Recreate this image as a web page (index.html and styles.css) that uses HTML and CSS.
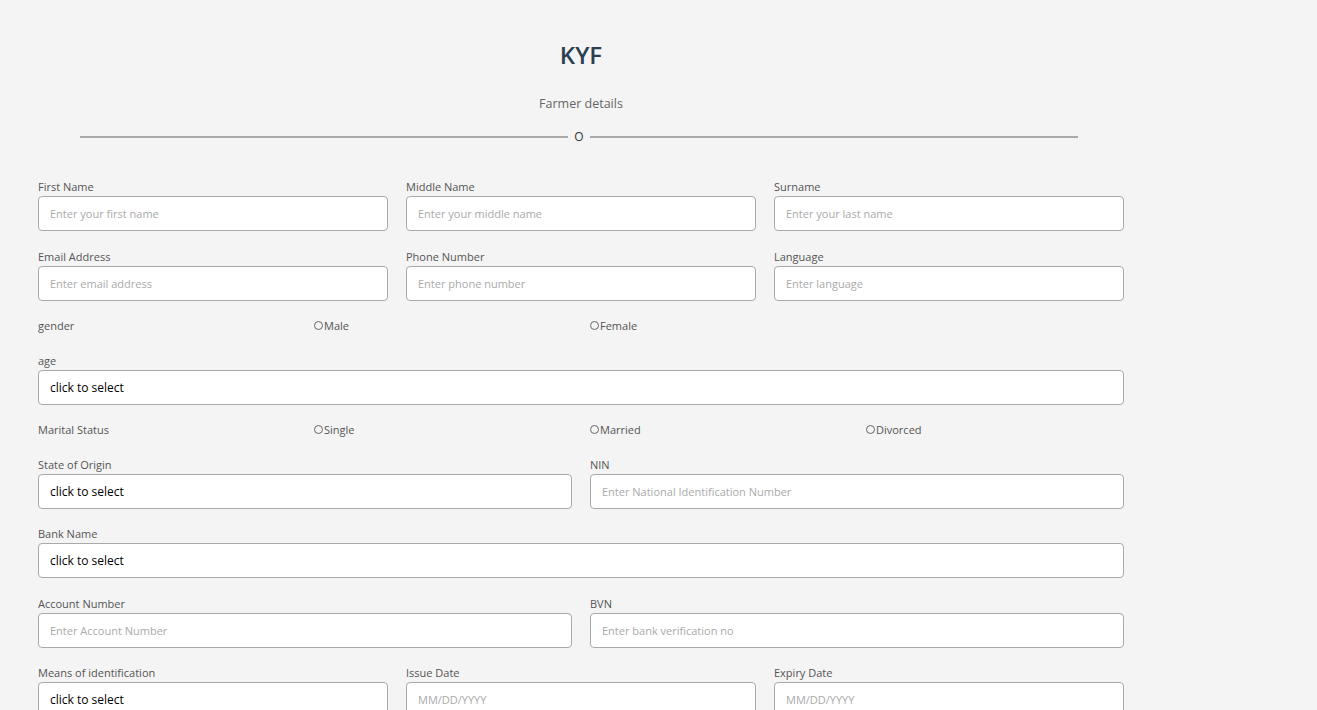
FILE: index.html
```html
<!DOCTYPE html>
<html lang="en">
<head>
<meta charset="utf-8">
<title>KYF</title>
<link rel="stylesheet" href="styles.css">
</head>
<body>
<div class="page">
  <header class="head">
    <h1 class="title">KYF</h1>
    <p class="subtitle">Farmer details</p>
    <div class="divider"><span class="line"></span><span class="step">O</span><span class="line"></span></div>
  </header>
  <form class="form">
    <div class="row cols-3">
      <div class="field"><label class="lbl">First Name</label><input class="inp" placeholder="Enter your first name"></div>
      <div class="field"><label class="lbl">Middle Name</label><input class="inp" placeholder="Enter your middle name"></div>
      <div class="field"><label class="lbl">Surname</label><input class="inp" placeholder="Enter your last name"></div>
    </div>
    <div class="row cols-3">
      <div class="field"><label class="lbl">Email Address</label><input class="inp" placeholder="Enter email address"></div>
      <div class="field"><label class="lbl">Phone Number</label><input class="inp" placeholder="Enter phone number"></div>
      <div class="field"><label class="lbl">Language</label><input class="inp" placeholder="Enter language"></div>
    </div>
    <div class="row cols-4 radios">
      <span class="lbl">gender</span>
      <label class="opt"><input type="radio" name="g" class="rad">Male</label>
      <label class="opt"><input type="radio" name="g" class="rad">Female</label>
    </div>
    <div class="row">
      <div class="field"><label class="lbl">age</label><div class="inp sel">click to select</div></div>
    </div>
    <div class="row cols-4 radios">
      <span class="lbl">Marital Status</span>
      <label class="opt"><input type="radio" name="m" class="rad">Single</label>
      <label class="opt"><input type="radio" name="m" class="rad">Married</label>
      <label class="opt"><input type="radio" name="m" class="rad">Divorced</label>
    </div>
    <div class="row cols-2">
      <div class="field"><label class="lbl">State of Origin</label><div class="inp sel">click to select</div></div>
      <div class="field"><label class="lbl">NIN</label><input class="inp" placeholder="Enter National Identification Number"></div>
    </div>
    <div class="row">
      <div class="field"><label class="lbl">Bank Name</label><div class="inp sel">click to select</div></div>
    </div>
    <div class="row cols-2">
      <div class="field"><label class="lbl">Account Number</label><input class="inp" placeholder="Enter Account Number"></div>
      <div class="field"><label class="lbl">BVN</label><input class="inp" placeholder="Enter bank verification no"></div>
    </div>
    <div class="row cols-3">
      <div class="field"><label class="lbl">Means of identification</label><div class="inp sel">click to select</div></div>
      <div class="field"><label class="lbl">Issue Date</label><input class="inp" placeholder="MM/DD/YYYY"></div>
      <div class="field"><label class="lbl">Expiry Date</label><input class="inp" placeholder="MM/DD/YYYY"></div>
    </div>
  </form>
</div>
</body>
</html>
```
FILE: styles.css
```css
* { box-sizing: border-box; }
html, body { margin: 0; padding: 0; background: #f4f4f4; }
body { font-family: "Open Sans", "Noto Sans", sans-serif; color: #555; }
.page { width: 1086px; margin-left: 38px; padding-bottom: 40px; }
.head { padding-top: 40px; text-align: center; }
.title { margin: 0; font-size: 24px; line-height: 30px; font-weight: 600; color: #2c3e50; }
.subtitle { margin: 26px 0 0; font-size: 12.5px; line-height: 16px; color: #666; }
.divider { display: flex; align-items: center; margin: 18px 46px 0 42px; height: 14px; }
.line { flex: 1; height: 2px; background: #aaa; }
.step { width: 22px; text-align: center; font-size: 12px; line-height: 14px; color: #333; }
.form { display: flex; flex-direction: column; gap: 18.5px; margin-top: 36px; }
.row { display: grid; grid-template-columns: 1fr; gap: 18px; }
.cols-2 { grid-template-columns: repeat(2, 1fr); }
.cols-3 { grid-template-columns: repeat(3, 1fr); }
.cols-4 { grid-template-columns: repeat(4, 1fr); }
.field { display: flex; flex-direction: column; gap: 2px; }
.lbl { font-size: 11px; line-height: 14px; color: #555; }
.inp { height: 35px; width: 100%; border: 1px solid #a9a9a9; border-radius: 4px; background: #fff; padding: 0 11px; font-family: "Open Sans", "Noto Sans", sans-serif; font-size: 11px; color: #333; outline: none; margin: 0; }
.inp::placeholder { color: #aaa; }
.sel { display: flex; align-items: center; font-size: 12px; color: #000; }
.radios { align-items: center; height: 16.2px; padding-bottom: 2px; }
.opt { display: flex; align-items: center; font-size: 11px; line-height: 14px; color: #555; }
.rad { appearance: none; -webkit-appearance: none; width: 9px; height: 9px; margin: 0 1px 1px 0; border: 1px solid #666; border-radius: 50%; background: transparent; }
```
